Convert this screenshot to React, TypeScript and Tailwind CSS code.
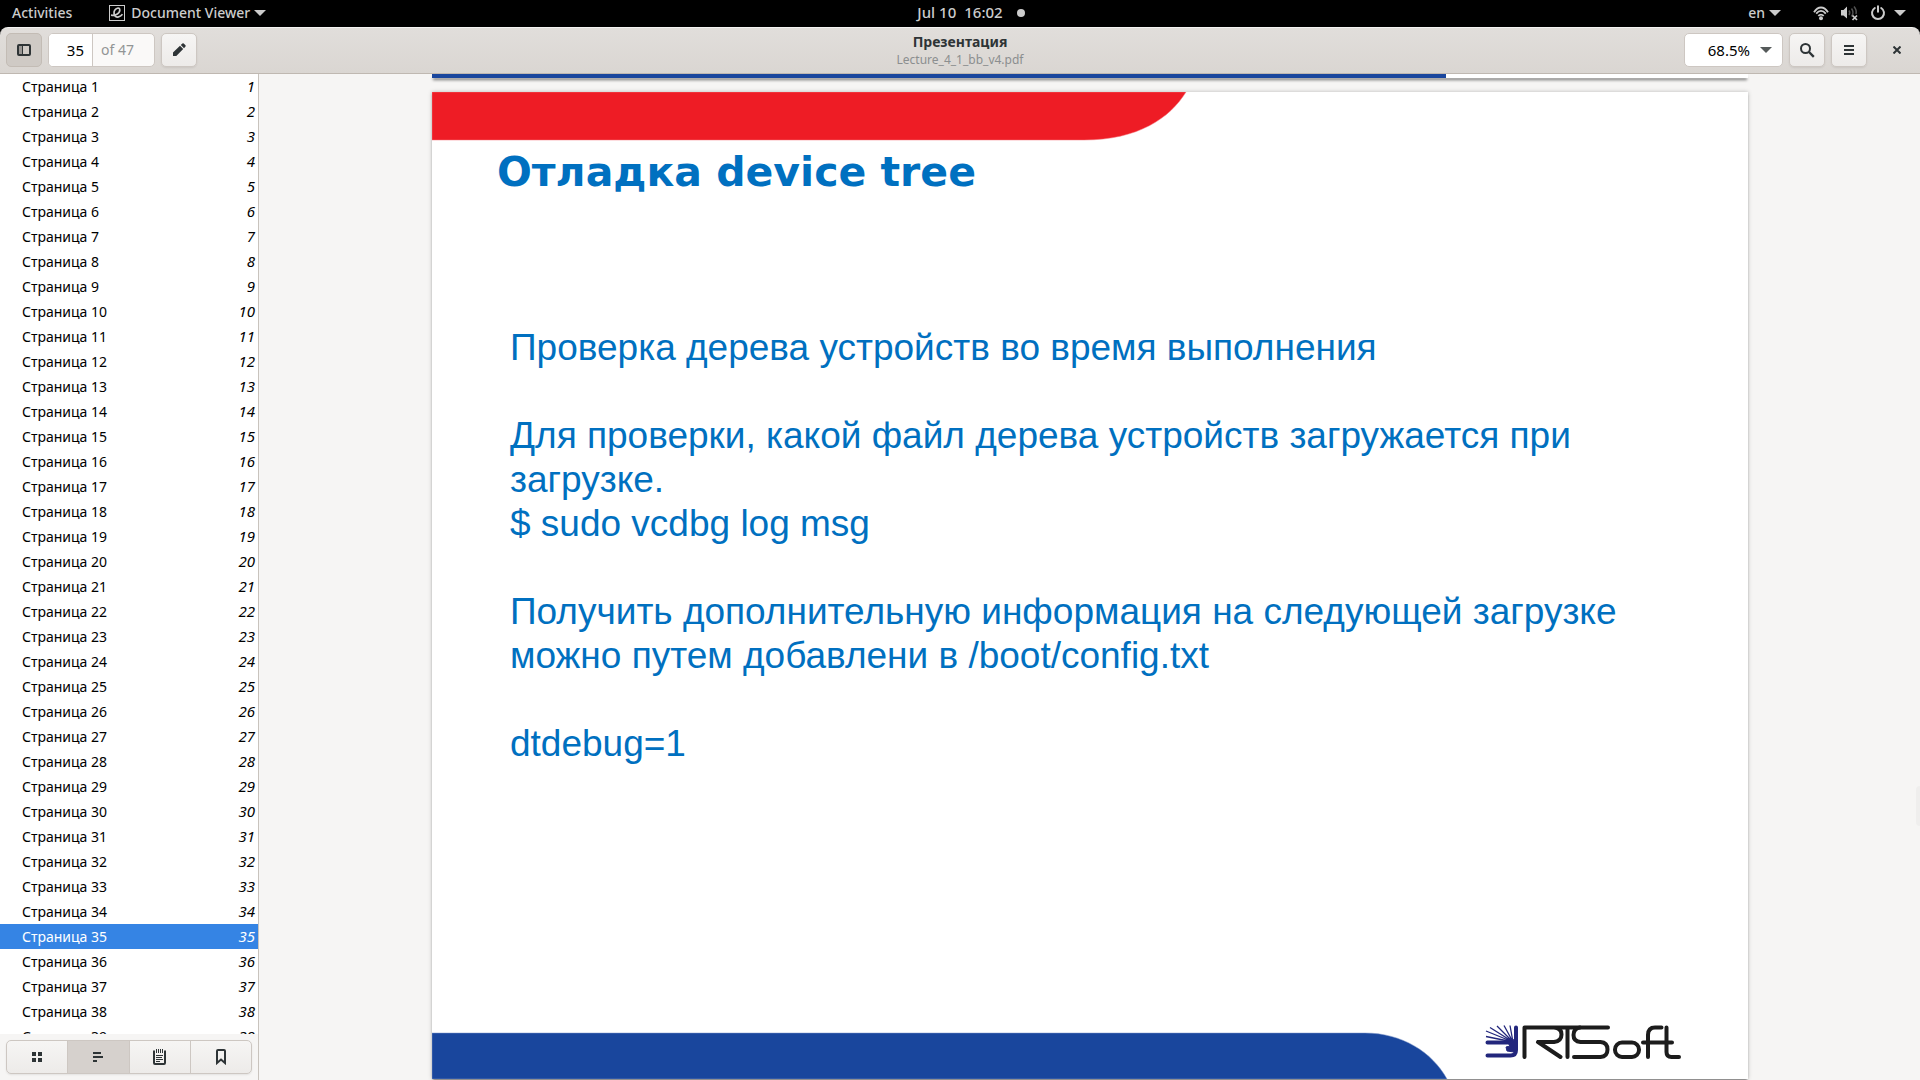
import React from "react";

const pages = Array.from({ length: 47 }, (_, i) => i + 1);

function Caret({ className }: { className: string }) {
  return (
    <svg viewBox="0 0 12 6" className={className} fill="currentColor" aria-hidden="true">
      <path d="M0 0h12L6 6z" />
    </svg>
  );
}

function TopBar() {
  return (
    <nav className="grid h-[27px] shrink-0 grid-cols-[1fr_auto_1fr] items-center bg-black pb-px text-sm font-medium text-[#cccccc]">
      <div className="flex items-center pl-3">
        <button type="button">Activities</button>
        <button type="button" className="ml-[37px] flex items-center">
          <svg viewBox="0 0 16 16" className="size-4" fill="none" stroke="currentColor" aria-hidden="true">
            <rect x="0.5" y="0.5" width="15" height="15" />
            <path strokeWidth="1.7" d="M2 10.2c4 .6 8.800-1.500 8.800-5.200C10.800 3.200 9.500 2.800 8.300 3.200 6 4 4.800 6.400 5.100 8.900c.3 2.600 2.300 3.500 4.400 3 1.600-.4 3-1.300 4-2.600" />
          </svg>
          <span className="ml-1.5">Document Viewer</span>
          <Caret className="ml-1 h-1.5 w-3" />
        </button>
      </div>
      <button type="button" className="flex items-center gap-3.5 pl-[22px]">
        <span className="flex gap-2 text-[15px]">
          <span>Jul 10</span>
          <span>16:02</span>
        </span>
        <span className="size-2 rounded-full bg-current" />
      </button>
      <div className="flex items-center justify-end pr-3.5">
        <button type="button" className="flex items-center gap-1">
          en
          <Caret className="h-1.5 w-3" />
        </button>
        <button type="button" aria-label="System menu" className="ml-8 flex items-center">
          <svg viewBox="0 0 16 16" className="size-4" fill="none" stroke="currentColor" strokeWidth="1.8">
            <path d="M1 6.200C5-.1 11-.1 15 6.200" transform="translate(0 1)" />
            <path d="M3.200 8.600c3-3.600 6.600-3.600 9.600 0" />
            <path d="M5.300 10.900c1.700-1.800 3.700-1.800 5.400 0" />
            <circle cx="8" cy="13.300" r="2" fill="currentColor" stroke="none" />
          </svg>
          <svg viewBox="0 0 17 16" className="ml-3 h-4 w-[17px]" fill="none" stroke="currentColor">
            <path d="M0 5h2.500L6 1.500v12L2.500 10.500H0z" fill="currentColor" stroke="none" />
            <path opacity=".4" strokeWidth="1.500" d="M8 5.500q1.500 2 0 4.500M10.500 3.500q3 4 0 8M13 1.500q3 3.500 2 7.500" />
            <path strokeWidth="1.700" d="M11.500 10.500l4.500 4.500M16 10.500l-4.500 4.500" />
          </svg>
          <svg viewBox="0 0 16 16" className="ml-3 size-4" fill="none" stroke="currentColor" strokeWidth="2" strokeLinecap="round">
            <path d="M4.800 3a6 6 0 1 0 6.400 0M8 1.200v5.500" />
          </svg>
          <Caret className="ml-2 h-1.5 w-3" />
        </button>
      </div>
    </nav>
  );
}

const toolButton =
  "flex h-[34px] w-9 items-center justify-center rounded-[5px] border border-[#cdc7c2] bg-linear-to-b from-[#f6f5f4] to-[#edebe9] shadow-[0_1px_2px_rgba(0,0,0,0.08)]";

function HeaderBar() {
  return (
    <div className="shrink-0 bg-black">
      <header className="grid h-[47px] grid-cols-[1fr_auto_1fr] items-center rounded-t-lg border-t border-b border-t-[#f4f3f2] border-b-[#bfb8b1] bg-linear-to-b from-[#e1dedb] to-[#dad6d2] px-1.5 pb-px text-[#2e3436]">
        <div className="flex gap-1.5">
          <button type="button" aria-label="Side pane" aria-pressed="true" className="flex h-[34px] w-9 items-center justify-center rounded-[5px] border border-[#c3bcb5] bg-[#cfcac5]">
            <svg viewBox="0 0 14 12" className="h-3 w-3.5" fill="none" stroke="currentColor">
              <rect x="1" y="1" width="12" height="10" rx="1" strokeWidth="2" />
              <path d="M5.500 2v8" />
              <path d="M2 2h3v8H2z" fill="#9a9794" stroke="none" />
            </svg>
          </button>
          <div className="flex h-[34px] w-[107px] overflow-hidden rounded-[5px] border border-[#cdc7c2] bg-[#faf9f8] text-[15px]">
            <input aria-label="Page" defaultValue="35" className="w-11 border-r border-[#cdc7c2] bg-white pr-2 text-right text-black outline-none" />
            <span className="self-center pl-2 text-sm text-[#929595]">of 47</span>
          </div>
          <button type="button" aria-label="Annotate" className={toolButton}>
            <svg viewBox="0 0 14 14" className="size-3.5" fill="currentColor">
              <path d="M1 13v-3.500L8 2.800 11.200 6 4.300 13zM8.800 2l1.600-1.500q.7-.5 1.300 0L13.500 2.300q.5.600 0 1.300L12 5.200z" />
            </svg>
          </button>
        </div>
        <div className="pt-0.5 text-center">
          <h1 className="text-sm leading-[18px] font-bold">Презентация</h1>
          <p className="text-xs leading-[18px] text-[#8b8e8f]">Lecture_4_1_bb_v4.pdf</p>
        </div>
        <div className="flex items-center justify-end gap-1.5">
          <div className="flex h-[34px] w-[99px] items-center rounded-[5px] border border-[#cdc7c2] bg-white pr-2.5">
            <input aria-label="Zoom" defaultValue="68.5%" className="min-w-0 flex-1 pr-2.5 text-right text-[15px] text-black outline-none" />
            <button type="button" aria-label="Zoom levels" className="text-[#555a5a]">
              <Caret className="h-1.5 w-3" />
            </button>
          </div>
          <button type="button" aria-label="Find" className={toolButton}>
            <svg viewBox="0 0 16 16" className="size-4" fill="none" stroke="currentColor" strokeWidth="2">
              <circle cx="6.500" cy="6.500" r="4.500" />
              <path strokeWidth="2.400" d="M10 10l4.800 4.800" />
            </svg>
          </button>
          <button type="button" aria-label="Menu" className={toolButton}>
            <svg viewBox="0 0 10 10" className="size-2.5" fill="currentColor">
              <path d="M0 0h10v2H0zM0 4h10v2H0zM0 8h10v2H0z" />
            </svg>
          </button>
          <button type="button" aria-label="Close" className="ml-[7px] flex h-[34px] w-[34px] items-center justify-center">
            <svg viewBox="0 0 8 8" className="size-2" stroke="currentColor" strokeWidth="2">
              <path d="M.5.500l7 7M7.500.500l-7 7" />
            </svg>
          </button>
        </div>
      </header>
    </div>
  );
}

const tab = "flex flex-1 items-center justify-center border-r border-[#cdc7c2]";

function Sidebar() {
  return (
    <aside className="flex w-[259px] shrink-0 flex-col border-r border-[#c8c3bd] bg-[#f6f5f4]">
      <ul className="min-h-0 flex-1 [scrollbar-width:none] overflow-y-auto bg-white text-sm">
        {pages.map((n) => (
          <li key={n}>
            <a
              href={"#page-" + n}
              className={
                n === 35
                  ? "flex h-[25px] items-center justify-between bg-[#3584e4] pr-[3px] pl-[22px] text-white"
                  : "flex h-[25px] items-center justify-between pr-[3px] pl-[22px] text-black"
              }
            >
              <span>Страница {n}</span>
              <i className="text-[15px]">{n}</i>
            </a>
          </li>
        ))}
      </ul>
      <div className="shrink-0 p-1.5 text-[#2e3436]">
        <div className="flex h-[34px] overflow-hidden rounded-[5px] border border-[#cdc7c2] bg-linear-to-b from-[#f6f5f4] to-[#edebe9] shadow-[0_1px_2px_rgba(0,0,0,0.08)]">
          <button type="button" aria-label="Thumbnails" className={tab}>
            <svg viewBox="0 0 10 10" className="size-2.5" fill="currentColor">
              <path d="M0 0h4v4H0zM6 0h4v4H6zM0 6h4v4H0zM6 6h4v4H6z" />
            </svg>
          </button>
          <button type="button" aria-label="Outline" aria-pressed="true" className={tab + " bg-[#d6d1cd]"}>
            <svg viewBox="0 0 10 10" className="size-2.5" fill="currentColor">
              <path d="M0 0h8v2H0zM0 4h10v2H0zM0 8h4v2H0z" />
            </svg>
          </button>
          <button type="button" aria-label="Annotations" className={tab}>
            <svg viewBox="0 0 13 16" className="h-4 w-[13px]" fill="none" stroke="currentColor">
              <path strokeWidth="2" d="M2 2.500H1V14q0 1 1 1h9q1 0 1-1V2.500h-1" />
              <path d="M3.500 0v4M5.500 0v4M7.500 0v4M9.500 0v4M3 6.500h7M3 8.500h6M3 10.500h7M3 12.500h4" />
            </svg>
          </button>
          <button type="button" aria-label="Bookmarks" className="flex w-[60px] items-center justify-center">
            <svg viewBox="0 0 10 16" className="h-4 w-2.5" fill="none" stroke="currentColor" strokeWidth="2">
              <path d="M1 14V2q0-1 1-1h6q1 0 1 1v12L5 10.500z" />
            </svg>
          </button>
        </div>
      </div>
    </aside>
  );
}

function Logo() {
  return (
    <svg viewBox="0 0 196 34" className="h-[34px] w-[196px]" fill="none" strokeLinecap="round" strokeLinejoin="round" role="img" aria-label="RTSoft">
      <g stroke="#22267c">
        <path strokeWidth="4" d="M2.500 17.500h20M2.500 30.500h23q5.500 0 5.500-5.500V2.500" />
        <path strokeWidth="1.300" strokeLinecap="butt" d="M28 17L1 11.500M28 17L1 6M28 17L5 2.500M28 17L12 1M28 17L19 .5M28 17L25 .5" />
        <path d="M29 15v12l-7-1-1-4 4-1-3-4z" fill="#22267c" />
      </g>
      <g stroke="#1c1c1c" strokeWidth="4">
        <path d="M39.500 32V2.500H123M53 17h16q7.500-1 7.500-7.500T69 2.500M53 17l22.500 15M82.500 4v28" />
        <path d="M95 2.500q-6.500 1-6.500 7.500t7 7h20q7 .5 7 7.500t-7 7.500H89" />
        <rect x="130" y="17.500" width="24" height="14.500" rx="7" />
        <path d="M163 32V10q0-7.500 7-7.500h6.500M158 17.500h29M181.500 2.500V27q0 5 5 5h7.500" />
      </g>
    </svg>
  );
}

function Slide() {
  return (
    <article className="flex aspect-4/3 w-full max-w-[1316px] shrink-0 flex-col overflow-hidden bg-white shadow-[0_0_4px_rgba(0,0,0,0.25),0_2px_2px_-1px_rgba(0,0,0,0.5)]">
      <svg viewBox="0 0 756 49" className="h-[49px] w-[756px] shrink-0" aria-hidden="true">
        <path d="M0 0H754C738 26 706 48 652 48H0z" fill="#ee1c25" stroke="#f4777c" strokeWidth="0.5" />
      </svg>
      <h2 className="mt-[7px] ml-[65px] font-['DejaVu_Sans',sans-serif] text-[41px] leading-[48px] font-bold text-[#0070c0]">Отладка device tree</h2>
      <div className="mt-[130px] mr-[100px] ml-[78px] font-['Liberation_Sans',sans-serif] text-[37px] leading-[44px] text-[#0070c0]">
        <p>Проверка дерева устройств во время выполнения</p>
        <p className="mt-11">Для проверки, какой файл дерева устройств загружается при загрузке.</p>
        <p>$ sudo vcdbg log msg</p>
        <p className="mt-11">Получить дополнительную информация на следующей загрузке можно путем добавлени в /boot/config.txt</p>
        <p className="mt-11">dtdebug=1</p>
      </div>
      <footer className="mt-auto flex items-end justify-between">
        <svg viewBox="0 0 1016 47" className="h-[47px] w-[1016px]" aria-hidden="true">
          <path d="M0 1H933C970 1 1000 20 1015 47H0z" fill="#19469d" stroke="#7f97c8" strokeWidth="0.5" />
        </svg>
        <div className="mr-[67px] mb-5">
          <Logo />
        </div>
      </footer>
    </article>
  );
}

export default function App() {
  return (
    <div className="flex h-screen flex-col overflow-hidden font-['Noto_Sans',sans-serif]">
      <TopBar />
      <HeaderBar />
      <div className="flex min-h-0 flex-1">
        <Sidebar />
        <main className="relative flex min-w-0 flex-1 flex-col items-center overflow-hidden bg-[#f6f5f4] pl-px">
          <div className="mb-3.5 flex h-1 w-full max-w-[1316px] shrink-0 bg-white shadow-[0_3px_3px_-1px_rgba(0,0,0,0.6)]">
            <div className="w-[1014px] bg-[#19469d]" />
          </div>
          <Slide />
          <div className="absolute right-0 bottom-[254px] h-10 w-1 rounded-l bg-[#efeeed]" />
        </main>
      </div>
    </div>
  );
}
